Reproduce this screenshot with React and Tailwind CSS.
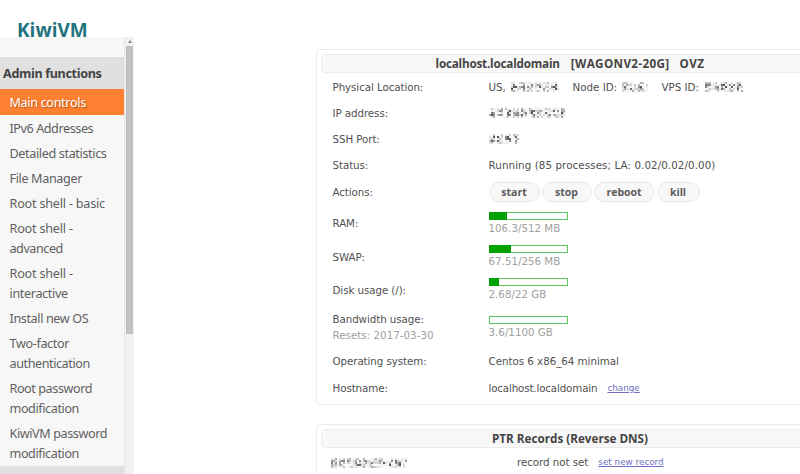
const NAV = [
  { label: ['IPv6 Addresses'], h: 'h-[25px]', ls: ['tracking-[-0.42px]'] },
  { label: ['Detailed statistics'], h: 'h-[25px]', ls: ['tracking-[-0.36px]'] },
  { label: ['File Manager'], h: 'h-[25px]', ls: ['tracking-[-0.36px]'] },
  { label: ['Root shell - basic'], h: 'h-[25px]', ls: ['tracking-[-0.2px]'] },
  { label: ['Root shell -', 'advanced'], h: 'h-[45px]', ls: ['tracking-[-0.2px]', 'tracking-[-0.45px]'] },
  { label: ['Root shell -', 'interactive'], h: 'h-[45px]', ls: ['tracking-[-0.2px]', 'tracking-[-0.35px]'] },
  { label: ['Install new OS'], h: 'h-[25px]', ls: ['tracking-[-0.38px]'] },
  { label: ['Two-factor', 'authentication'], h: 'h-[45px]', ls: ['tracking-[-0.35px]', 'tracking-[-0.42px]'] },
  { label: ['Root password', 'modification'], h: 'h-[45px]', ls: ['tracking-[-0.42px]', 'tracking-[-0.4px]'] },
  { label: ['KiwiVM password', 'modification'], h: 'h-[45px]', ls: ['tracking-[-0.4px]', 'tracking-[-0.4px]'] },
];

// Smudged mosaic that hides a private value.
function Mosaic({ width, seed }) {
  const cells = [];
  let s = seed;
  for (let x = 0; x < width; x += 2) {
    for (let y = 0; y < 10; y += 2) {
      s = (s * 1103515245 + 12345) % 2147483648;
      const r = s / 2147483648;
      const edge = y === 0 || y === 8 ? 0.5 : 1;
      const gap = x % 8 === 6 ? 0.3 : 1;
      cells.push(
        <rect key={`${x}-${y}`} x={x} y={y} width="2" height="2" fill="#444" opacity={(r * r * 0.95 * edge * gap).toFixed(2)} />
      );
    }
  }
  return (
    <svg width={width} height="10" viewBox={`0 0 ${width} 10`} className="shrink-0 blur-[0.6px]">
      {cells}
    </svg>
  );
}

function Row({ label, h, children }) {
  return (
    <div className={`flex items-center ${h}`}>
      <div className="w-[156px] shrink-0 leading-[16px] tracking-[-0.08px]">{label}</div>
      {children}
    </div>
  );
}

function Usage({ fill, text }) {
  return (
    <div className="flex h-[23px] flex-col">
      <div className="h-[8px] w-[79px] shrink-0 border border-[#5cc45c] bg-white">
        <div className={`-mt-px -ml-px h-[8px] bg-[#00a000] ${fill}`} />
      </div>
      <div className="h-[16px] shrink-0 pt-[1px] leading-[15px] text-[#a0a0a0]">{text}</div>
    </div>
  );
}

function Pill({ w, children }) {
  return (
    <button className={`h-[20px] rounded-full border border-[#e6e6e6] bg-[#f8f8f8] text-center font-['Open_Sans',sans-serif] text-[10.5px] leading-[19px] font-bold text-[#5c5c5c] ${w}`}>
      {children}
    </button>
  );
}

function Title({ children }) {
  return (
    <div className="flex h-[19px] items-center justify-center rounded-[4px] border border-[#ececec] bg-[#f8f8f8] pt-[1px] font-['Open_Sans',sans-serif] text-[11.7px] font-bold whitespace-pre text-[#444]">
      {children}
    </div>
  );
}

export default function App() {
  return (
    <div className="flex h-[474px] w-[800px] overflow-hidden bg-white">
      <aside className="flex w-[134px] shrink-0 flex-col font-['Noto_Sans',sans-serif]">
        <div className="h-[37px] overflow-hidden pt-[17px] pl-[17px]">
          <div className="font-['Open_Sans',sans-serif] text-[19px] leading-[26px] font-bold text-[#23737f]">KiwiVM</div>
        </div>
        <div className="flex h-[437px]">
          <nav className="w-[124px] bg-[#f7f7f7] text-[12.6px] text-[#5f5f5f]">
            <div className="h-[20px]" />
            <div className="flex h-[32px] items-center bg-[#e0e0e0] pt-[3px] pl-[3px] font-bold tracking-[-0.33px] whitespace-nowrap text-[#444]">Admin functions</div>
            <div className="mb-[1px] flex h-[26px] items-center bg-[#ff8030] pt-[2px] pl-[9.5px] tracking-[-0.33px] whitespace-nowrap text-white [text-shadow:1px_1px_1px_#00000055]">Main controls</div>
            {NAV.map((n, i) => (
              <div key={i} className={`flex flex-col pt-[3px] pl-[9.5px] leading-[20px] whitespace-nowrap ${n.h}`}>
                {n.label.map((t, j) => (
                  <span key={j} className={n.ls[j]}>{t}</span>
                ))}
              </div>
            ))}
            <div className="h-[9px] bg-[#e0e0e0]" />
          </nav>
          <div className="w-[10px] border-l border-[#e4e4e4] bg-[#f1f1f1] px-[1px]">
            <div className="flex h-[9px] items-center justify-center">
              <svg width="4" height="3" viewBox="0 0 4 3"><path d="M2 0L4 3H0z" fill="#8a8a8a" /></svg>
            </div>
            <div className="h-[288px] bg-[#c1c1c1]" />
          </div>
        </div>
      </aside>

      <main className="flex-1 pt-[49px] pl-[182px] font-['DejaVu_Sans',Verdana,sans-serif] text-[10.3px] whitespace-nowrap text-[#505050]">
        <section className="h-[356px] w-[508px] rounded-[4px] border border-[#ececec] px-[4px] pt-[4px]">
          <Title>
            <span className="tracking-[-0.2px]">localhost.localdomain</span>
            <span className="ml-[11px] tracking-[0.35px]">[WAGONV2-20G]</span>
            <span className="ml-[10px] tracking-[0.4px]">OVZ</span>
          </Title>
          <div className="pt-[1px] pl-[11.5px]">
            <Row label="Physical Location:" h="h-[26px]">
              <span className="w-[22px] pt-[1px]">US,</span>
              <Mosaic width={48} seed={7} />
              <span className="ml-[14px] w-[49px] pt-[1px]">Node ID:</span>
              <Mosaic width={26} seed={21} />
              <span className="ml-[14px] w-[43px] pt-[1px]">VPS ID:</span>
              <Mosaic width={38} seed={33} />
            </Row>
            <Row label="IP address:" h="h-[26px]"><Mosaic width={76} seed={45} /></Row>
            <Row label="SSH Port:" h="h-[26px]"><Mosaic width={30} seed={59} /></Row>
            <Row label="Status:" h="h-[26px]"><span className="pt-[1px] tracking-[0.09px]">Running (85 processes; LA: 0.02/0.02/0.00)</span></Row>
            <Row label="Actions:" h="h-[28px]">
              <div className="flex gap-[2px]">
                <Pill w="w-[51px]">start</Pill>
                <Pill w="w-[50px]">stop</Pill>
                <Pill w="w-[61px]">reboot</Pill>
                <Pill w="w-[43px]">kill</Pill>
              </div>
            </Row>
            <Row label="RAM:" h="h-[34px]"><Usage fill="w-[18px]" text="106.3/512 MB" /></Row>
            <Row label="SWAP:" h="h-[33px]"><Usage fill="w-[22px]" text="67.51/256 MB" /></Row>
            <Row label="Disk usage (/):" h="h-[33px]"><Usage fill="w-[10px]" text="2.68/22 GB" /></Row>
            <Row label={<>Bandwidth usage:<br /><span className="tracking-[0.02px] text-[#a0a0a0]">Resets: 2017-03-30</span></>} h="h-[42px]">
              <Usage fill="w-0" text="3.6/1100 GB" />
            </Row>
            <Row label="Operating system:" h="h-[26px]"><span className="pt-[1px] tracking-[-0.03px]">Centos 6 x86_64 minimal</span></Row>
            <Row label="Hostname:" h="h-[28px]">
              <span className="pt-[1px] tracking-[-0.15px]">localhost.localdomain</span>
              <a href="#" className="ml-[10px] pt-[1px] text-[8.8px] text-[#6f6fc0] underline">change</a>
            </Row>
          </div>
        </section>
        <section className="mt-[19px] h-[80px] w-[508px] rounded-[4px] border border-[#ececec] px-[4px] pt-[4px]">
          <Title>PTR Records (Reverse DNS)</Title>
          <div className="flex h-[29px] items-center pl-[10px]">
            <Mosaic width={76} seed={77} />
            <span className="ml-[110px] tracking-[-0.05px]">record not set</span>
            <a href="#" className="ml-[10px] text-[8.8px] text-[#6f6fc0] underline">set new record</a>
          </div>
        </section>
      </main>
    </div>
  );
}
